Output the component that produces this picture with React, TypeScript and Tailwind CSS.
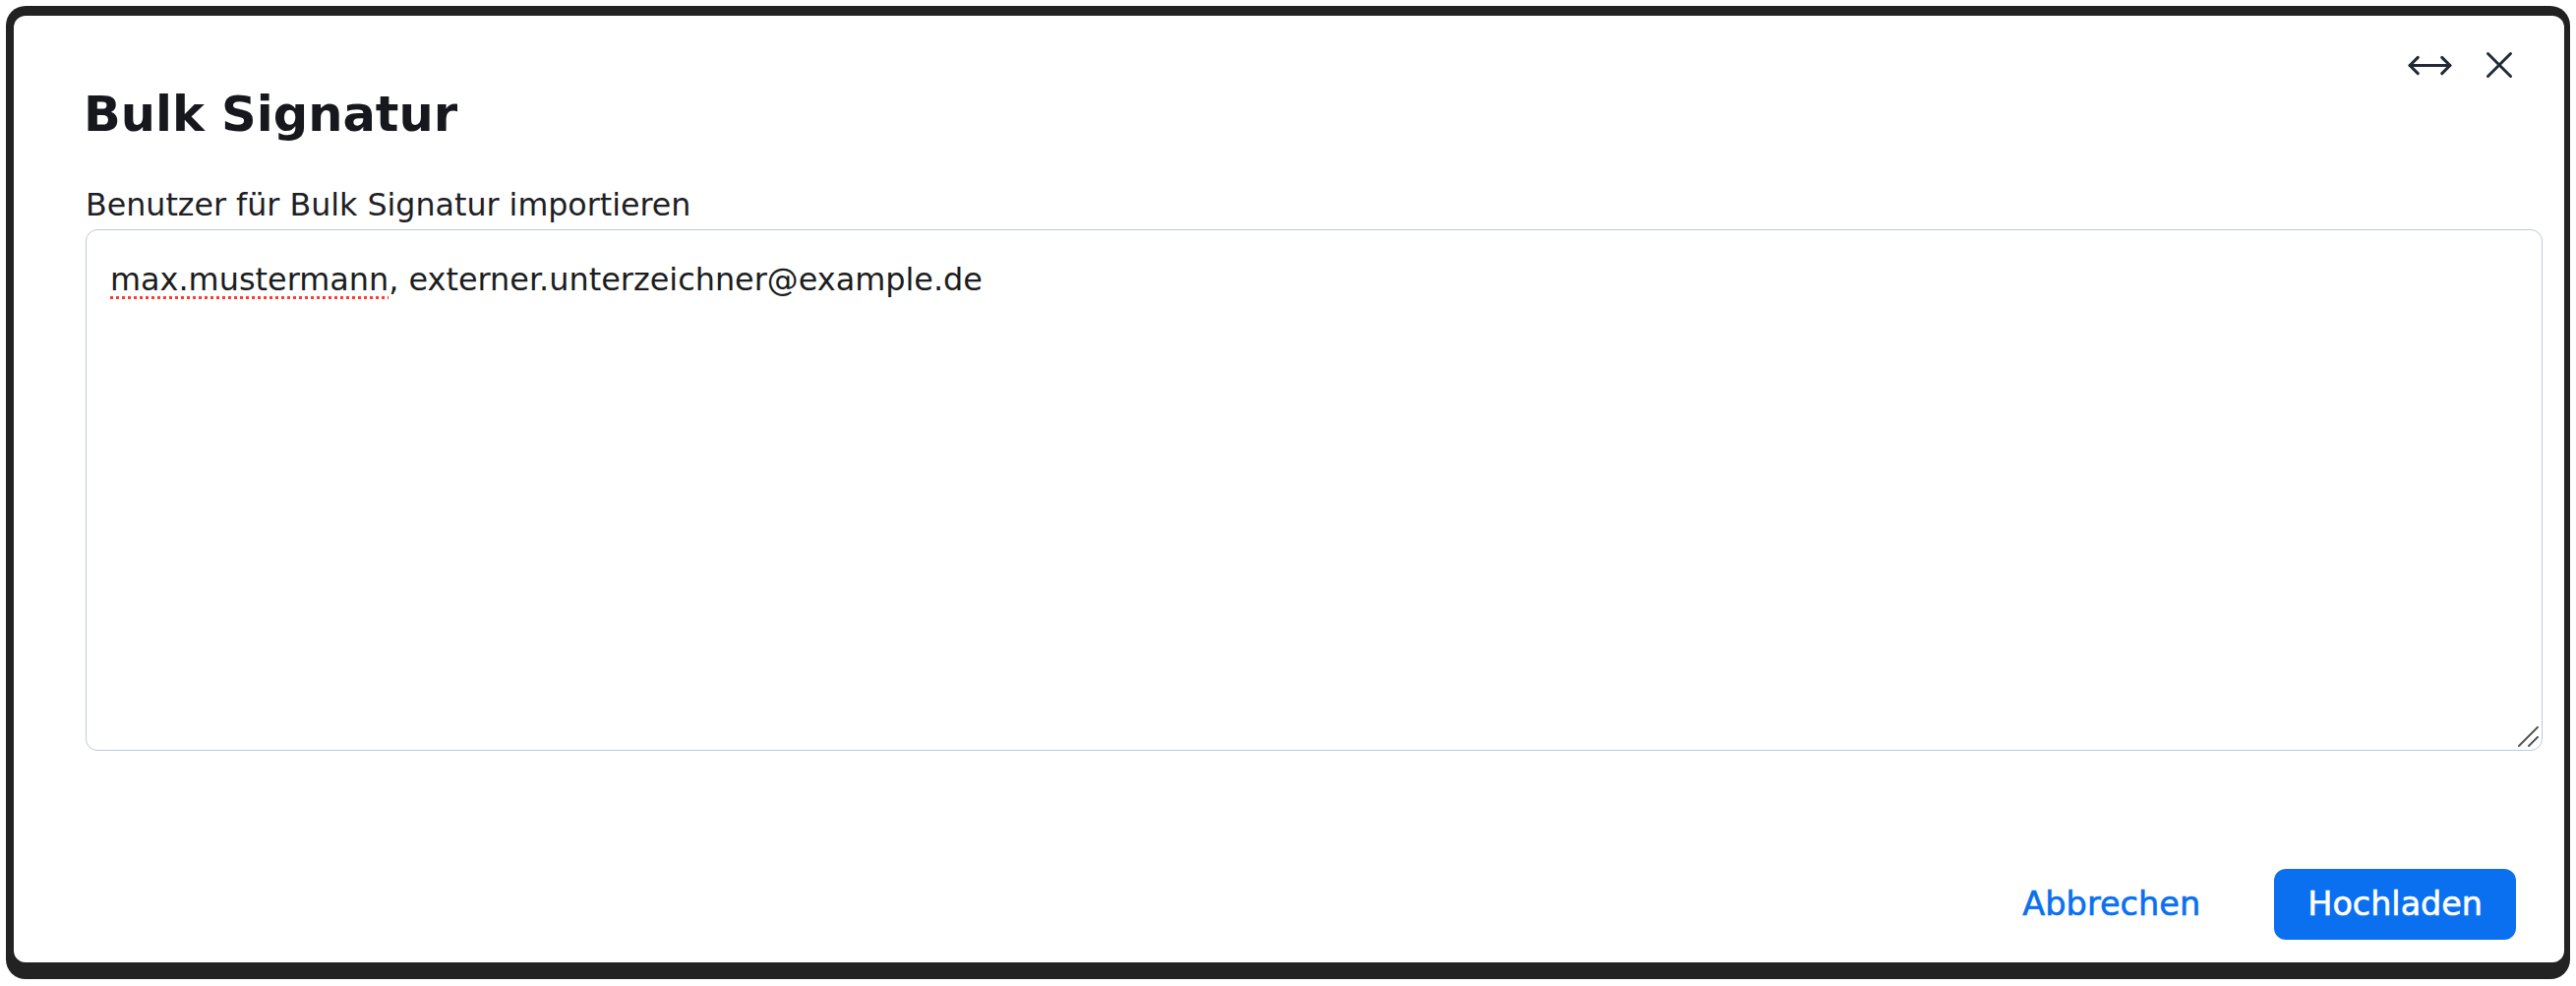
import React from "react";

function ArrowsIcon() {
  return (
    <svg width="49" height="49" viewBox="0 0 24 24" fill="none" stroke="#222a36" strokeWidth="1.5" strokeLinecap="round" strokeLinejoin="round">
      <path d="m18 8 4 4-4 4" />
      <path d="M2 12h20" />
      <path d="m6 8-4 4 4 4" />
    </svg>
  );
}

function CloseIcon() {
  return (
    <svg width="46" height="46" viewBox="0 0 24 24" fill="none" stroke="#222a36" strokeWidth="1.5" strokeLinecap="round" strokeLinejoin="round">
      <path d="M18 6 6 18" />
      <path d="m6 6 12 12" />
    </svg>
  );
}

export default function App() {
  return (
    <div className="w-[2619px] h-[1002px] bg-white p-[6px] font-['DejaVu_Sans',sans-serif]">
      <div className="h-[989px] rounded-[20px] bg-[#222222] pt-[10px] pl-[8px] pr-[6px] pb-[17px]">
        <div className="h-full rounded-[12px] bg-white flex flex-col">
          <div className="flex justify-end items-center h-[40px] mt-[30px] pr-[43px] gap-[23px]">
            <button className="flex items-center justify-center w-[49px] h-[40px]">
              <ArrowsIcon />
            </button>
            <button className="flex items-center justify-center w-[46px] h-[40px]">
              <CloseIcon />
            </button>
          </div>
          <div className="pl-[73px] pr-[22px]">
            <h1 className="text-[49.5px] leading-[60px] font-bold text-[#16181d] -ml-[2px]">Bulk Signatur</h1>
            <label className="block mt-[44px] text-[31.7px] leading-[36px] text-[#1d2024]">
              Benutzer für Bulk Signatur importieren
            </label>
            <div className="relative mt-[7px] h-[530px] rounded-[12px] border border-[#bfc8da] bg-white pt-[28px] pl-[24px]">
              <div className="text-[31.9px] leading-[44px] text-[#1b1d20]">
                <span className="underline decoration-dotted decoration-[#ff3b30] decoration-[3px] underline-offset-[6px]">max.mustermann</span>
                , externer.unterzeichner@example.de
              </div>
              <svg className="absolute right-[2px] bottom-[2px]" width="24" height="24" viewBox="0 0 24 24" fill="none" stroke="#555" strokeWidth="2" strokeLinecap="round">
                <path d="M22 3 3 22" />
                <path d="M22 13 13 22" />
              </svg>
            </div>
          </div>
          <div className="mt-auto flex justify-end items-center gap-[39px] pr-[49px] pb-[23px]">
            <button className="h-[72px] px-[36px] rounded-[12px] text-[33.6px] text-[#0a70f0] [-webkit-text-stroke:0.6px_#0a70f0]">
              Abbrechen
            </button>
            <button className="h-[72px] px-[34px] rounded-[12px] bg-[#0a70f0] text-[33.4px] text-white [-webkit-text-stroke:0.6px_#ffffff]">
              Hochladen
            </button>
          </div>
        </div>
      </div>
    </div>
  );
}
